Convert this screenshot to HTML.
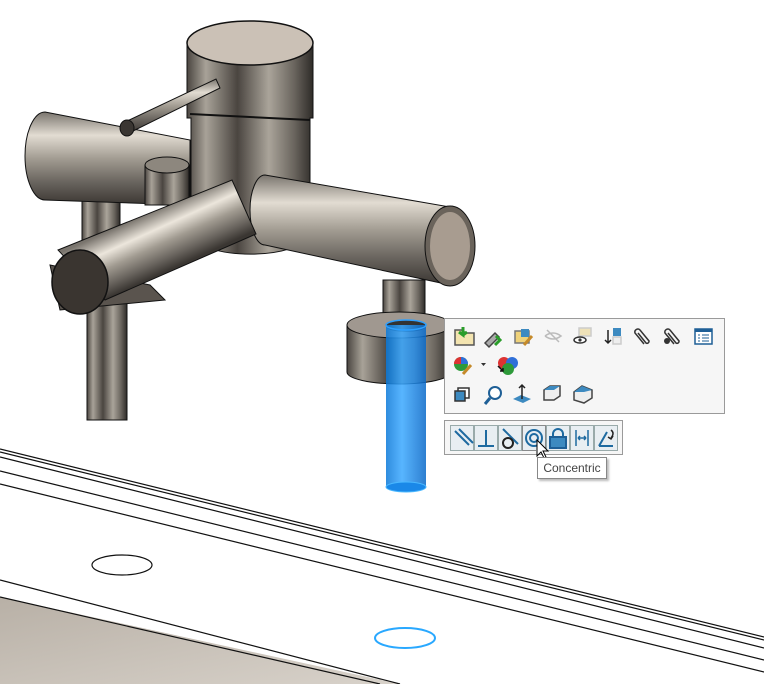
<!DOCTYPE html>
<html><head><meta charset="utf-8"><style>
html,body{margin:0;padding:0;background:#fff;width:764px;height:684px;overflow:hidden}
svg{position:absolute;left:0;top:0}
.tip{position:absolute;left:537px;top:457px;width:68px;height:20px;border:1px solid #888;background:#fff;font:12px "Liberation Sans",sans-serif;color:#444;line-height:20px;text-align:center;box-shadow:2px 2px 2px #bbb}
</style></head><body>
<svg width="764" height="684" viewBox="0 0 764 684">
<defs>
<linearGradient id="cv" x1="0" y1="0" x2="1" y2="0">
<stop offset="0" stop-color="#4a4540"/><stop offset="0.15" stop-color="#a8a298"/><stop offset="0.4" stop-color="#4a4540"/><stop offset="0.65" stop-color="#aaa49a"/><stop offset="0.85" stop-color="#6a655e"/><stop offset="1" stop-color="#2e2b28"/></linearGradient>
<linearGradient id="ch" x1="0" y1="0" x2="0" y2="1">
<stop offset="0" stop-color="#7a756e"/><stop offset="0.25" stop-color="#e2dcd2"/><stop offset="0.5" stop-color="#a29c92"/><stop offset="0.75" stop-color="#6a655f"/><stop offset="1" stop-color="#3a3632"/></linearGradient>
<linearGradient id="chf" gradientUnits="userSpaceOnUse" x1="155" y1="210" x2="180" y2="265">
<stop offset="0" stop-color="#7a756e"/><stop offset="0.3" stop-color="#ece6dc"/><stop offset="0.55" stop-color="#a29c92"/><stop offset="0.8" stop-color="#6a655f"/><stop offset="1" stop-color="#3a3632"/></linearGradient>
<linearGradient id="bl" x1="0" y1="0" x2="1" y2="0">
<stop offset="0" stop-color="#0a78d8"/><stop offset="0.4" stop-color="#3aa8ff"/><stop offset="1" stop-color="#0868c8"/></linearGradient>
<linearGradient id="fl" x1="0" y1="0" x2="1" y2="1">
<stop offset="0" stop-color="#b8b0a6"/><stop offset="1" stop-color="#d8d2ca"/></linearGradient>
</defs>
<polygon points="0,597 400,684 0,684" fill="url(#fl)"/>
<g stroke="#111" stroke-width="1.2" fill="none">
<line x1="0" y1="449" x2="764" y2="637"/>
<line x1="0" y1="452" x2="764" y2="640"/>
<line x1="0" y1="457" x2="764" y2="648"/>
<line x1="0" y1="471" x2="764" y2="660"/>
<line x1="0" y1="484" x2="764" y2="672"/>
<line x1="0" y1="580" x2="400" y2="684"/>
<line x1="0" y1="597" x2="380" y2="684"/>
<ellipse cx="122" cy="565" rx="30" ry="10"/>
</g>
<ellipse cx="405" cy="638" rx="30" ry="10" fill="none" stroke="#29a8ff" stroke-width="2"/>
<rect x="87" y="300" width="40" height="120" fill="url(#cv)" stroke="#111"/>
<rect x="82" y="200" width="38" height="40" fill="url(#cv)" stroke="#111"/>
<rect x="383" y="280" width="42" height="45" fill="url(#cv)" stroke="#111"/>
<path d="M347,325 L347,372 A52,12 0 0 0 451,372 L451,325 Z" fill="url(#cv)" stroke="#111"/>
<ellipse cx="399" cy="325" rx="52" ry="13" fill="#a09890" stroke="#111"/>
<ellipse cx="406" cy="326" rx="20" ry="6" fill="#333"/>
<path d="M45,112 L190,140 L190,205 L45,200 A20,44 0 0 1 45,112 Z" fill="url(#ch)" stroke="#111"/>
<path d="M187,43 L187,118 L191,118 L191,235 A60,22 0 0 0 310,235 L310,118 L313,118 L313,43 Z" fill="url(#cv)" stroke="#111"/>
<line x1="190" y1="114" x2="310" y2="120" stroke="#111" stroke-width="2"/>
<ellipse cx="250" cy="43" rx="63" ry="22" fill="#cbc1b6" stroke="#111" stroke-width="1.5"/>
<path d="M125,122 L216,79 L220,88 L129,133 Z" fill="url(#ch)" stroke="#111"/>
<ellipse cx="127" cy="128" rx="7" ry="8" fill="#3a3632" stroke="#111"/>
<path d="M265,175 L450,207 L450,285 L265,245 A15,35 0 0 1 265,175 Z" fill="url(#ch)" stroke="#111"/>
<ellipse cx="450" cy="246" rx="25" ry="40" fill="#6a635b" stroke="#111"/>
<ellipse cx="450" cy="246" rx="20" ry="34" fill="#a89c90"/>
<rect x="145" y="165" width="44" height="40" fill="url(#cv)" stroke="#111"/>
<ellipse cx="167" cy="165" rx="22" ry="8" fill="#8d877e" stroke="#111"/>
<path d="M50,265 L150,285 L165,300 L60,310 Z" fill="#5a544e" stroke="#111"/>
<path d="M58,250 L232,180 L256,234 L105,300 Z" fill="url(#chf)" stroke="#111"/>
<ellipse cx="80" cy="282" rx="28" ry="32" fill="#3a3530" stroke="#111" stroke-width="1.5"/>
<rect x="386" y="325" width="40" height="163" fill="url(#bl)" opacity="0.85"/>
<ellipse cx="406" cy="325" rx="20" ry="5" fill="none" stroke="#2ea0ff" stroke-width="1.5"/>
<ellipse cx="406" cy="487" rx="20" ry="5" fill="#1a88e8" stroke="#4ab8ff"/>
<rect x="444.5" y="318.5" width="280" height="95" fill="#f6f6f6" stroke="#9a9a9a"/>
<g stroke-width="1.5">
<path d="M455,330 h8 l2,3 h9 v12 h-19 z" fill="#f3e4b0" stroke="#555"/><path d="M463,327 v8 l-4,-3 m4,3 l4,-3" stroke="#2a9d2a" stroke-width="3" fill="none"/>
<path d="M485,343 l10,-10 l4,4 l-10,10 z" fill="#aaa" stroke="#444"/><path d="M496,336 l4,4 l-5,5" stroke="#2a9d2a" stroke-width="3" fill="none"/>
<rect x="515" y="331" width="14" height="12" fill="#efd27a" stroke="#777"/><rect x="521" y="329" width="8" height="8" fill="#3d8ac0"/><path d="M524,345 l8,-9" stroke="#c58a2a" stroke-width="3"/>
<path d="M545,336 q8,-6 16,0 q-8,6 -16,0 M547,330 l12,12" stroke="#bbb" fill="none"/>
<rect x="579" y="328" width="12" height="8" fill="#efe2b8" stroke="#ccc"/><ellipse cx="580" cy="340" rx="6" ry="3" fill="#fff" stroke="#333"/><circle cx="580" cy="340" r="1.6" fill="#333"/>
<path d="M608,330 v13 m-3,-3 l3,3 l3,-3" stroke="#222" fill="none"/><rect x="613" y="328" width="8" height="8" fill="#3d8ac0"/><rect x="613" y="337" width="8" height="7" fill="#eee" stroke="#ccc"/>
<path d="M638,333 l8,10 a2,2 0 0 0 3,-2 l-9,-11 a3,3 0 0 0 -5,3 l9,11" stroke="#333" fill="none"/>
<path d="M668,333 l8,10 a2,2 0 0 0 3,-2 l-9,-11 a3,3 0 0 0 -5,3 l9,11" stroke="#333" fill="none"/><circle cx="667" cy="341" r="3" fill="#333"/>
<rect x="695" y="329" width="17" height="15" fill="#fff" stroke="#1e5f96"/><rect x="695" y="329" width="17" height="3" fill="#1e5f96"/><path d="M698,335 h2 m2,0 h7 M698,338 h2 m2,0 h7 M698,341 h2 m2,0 h7" stroke="#1e5f96" stroke-width="1"/>
<circle cx="461" cy="364" r="7" fill="#2e9a3a"/><path d="M454,364 a7,7 0 0 1 7,-7 v7 z" fill="#d33"/><path d="M461,357 a7,7 0 0 1 7,7 h-7 z" fill="#2f6fd8"/><path d="M463,374 l8,-9" stroke="#c58a2a" stroke-width="3"/>
<path d="M481,363 h5 l-2.5,3 z" fill="#333" stroke="none"/>
<circle cx="504" cy="363" r="6" fill="#d33"/><circle cx="512" cy="363" r="6" fill="#2f6fd8"/><circle cx="508" cy="369" r="6" fill="#2e9a3a"/><path d="M498,366 l5,5 m0,-3 v3 h-3" stroke="#111" fill="none"/>
<rect x="458" y="388" width="11" height="10" fill="#fff" stroke="#333"/><rect x="455" y="391" width="10" height="10" fill="#3d8ac0" stroke="#333"/>
<circle cx="495" cy="393" r="6" fill="#fff" stroke="#1e5f96" stroke-width="2"/><path d="M490,398 l-5,6" stroke="#1e5f96" stroke-width="3"/>
<path d="M513,399 l8,-4 l10,4 l-8,4 z" fill="#3d8ac0"/><path d="M522,399 v-14 m-3,3 l3,-3 l3,3" stroke="#222" fill="none"/>
<path d="M544,390 l6,-4 h10 v10 l-6,4 h-10 z" fill="#eee" stroke="#444"/><path d="M544,390 l6,-4 h10 l-6,4 z" fill="#3d8ac0"/>
<path d="M574,392 l8,-6 l10,4 v8 l-8,5 l-10,-3 z" fill="#eee" stroke="#444"/><path d="M574,392 l8,-6 l10,4 l-8,2 z" fill="#3d8ac0"/>
</g>
<rect x="444.5" y="420.5" width="178" height="34" fill="#f6f6f6" stroke="#9a9a9a"/>
<g fill="#e8eef2" stroke="#9aa">
<rect x="450.5" y="425.5" width="23" height="25"/><rect x="474.5" y="425.5" width="23" height="25"/><rect x="498.5" y="425.5" width="23" height="25"/><rect x="522.5" y="425.5" width="23" height="25" stroke="#222" stroke-dasharray="1,1"/><rect x="546.5" y="425.5" width="23" height="25"/><rect x="570.5" y="425.5" width="23" height="25"/><rect x="594.5" y="425.5" width="23" height="25"/>
</g>
<g stroke="#1e6aa0" stroke-width="2" fill="none">
<path d="M455,431 l14,14 M459,429 l14,14"/>
<path d="M486,430 v15 M478,446 h16"/>
<path d="M503,429 l15,15"/><circle cx="508" cy="443" r="5" stroke="#222"/>
<circle cx="534" cy="438" r="8"/><circle cx="534" cy="438" r="4"/>
<path d="M553,437 v-3 a5,5 0 0 1 10,0 v3"/><rect x="550" y="437" width="16" height="11" fill="#3d8ac0" stroke="#1e5f96"/>
<path d="M576,430 v16 M588,430 v16 M578,438 h8 M578,438 l2,-2 M578,438 l2,2 M586,438 l-2,-2 M586,438 l-2,2" stroke-width="1.5"/>
<path d="M599,446 h14 M599,446 l8,-14" /><path d="M611,430 q4,3 0,8 m-3,-1 l3,2 l2,-3" stroke="#222" stroke-width="1.5"/>
</g>
<path d="M537,440 v16 l4,-4 l3,6 l2,-1 l-3,-6 h5 z" fill="#fff" stroke="#000" stroke-width="1"/>
</svg>
<div class="tip">Concentric</div>
</body></html>
